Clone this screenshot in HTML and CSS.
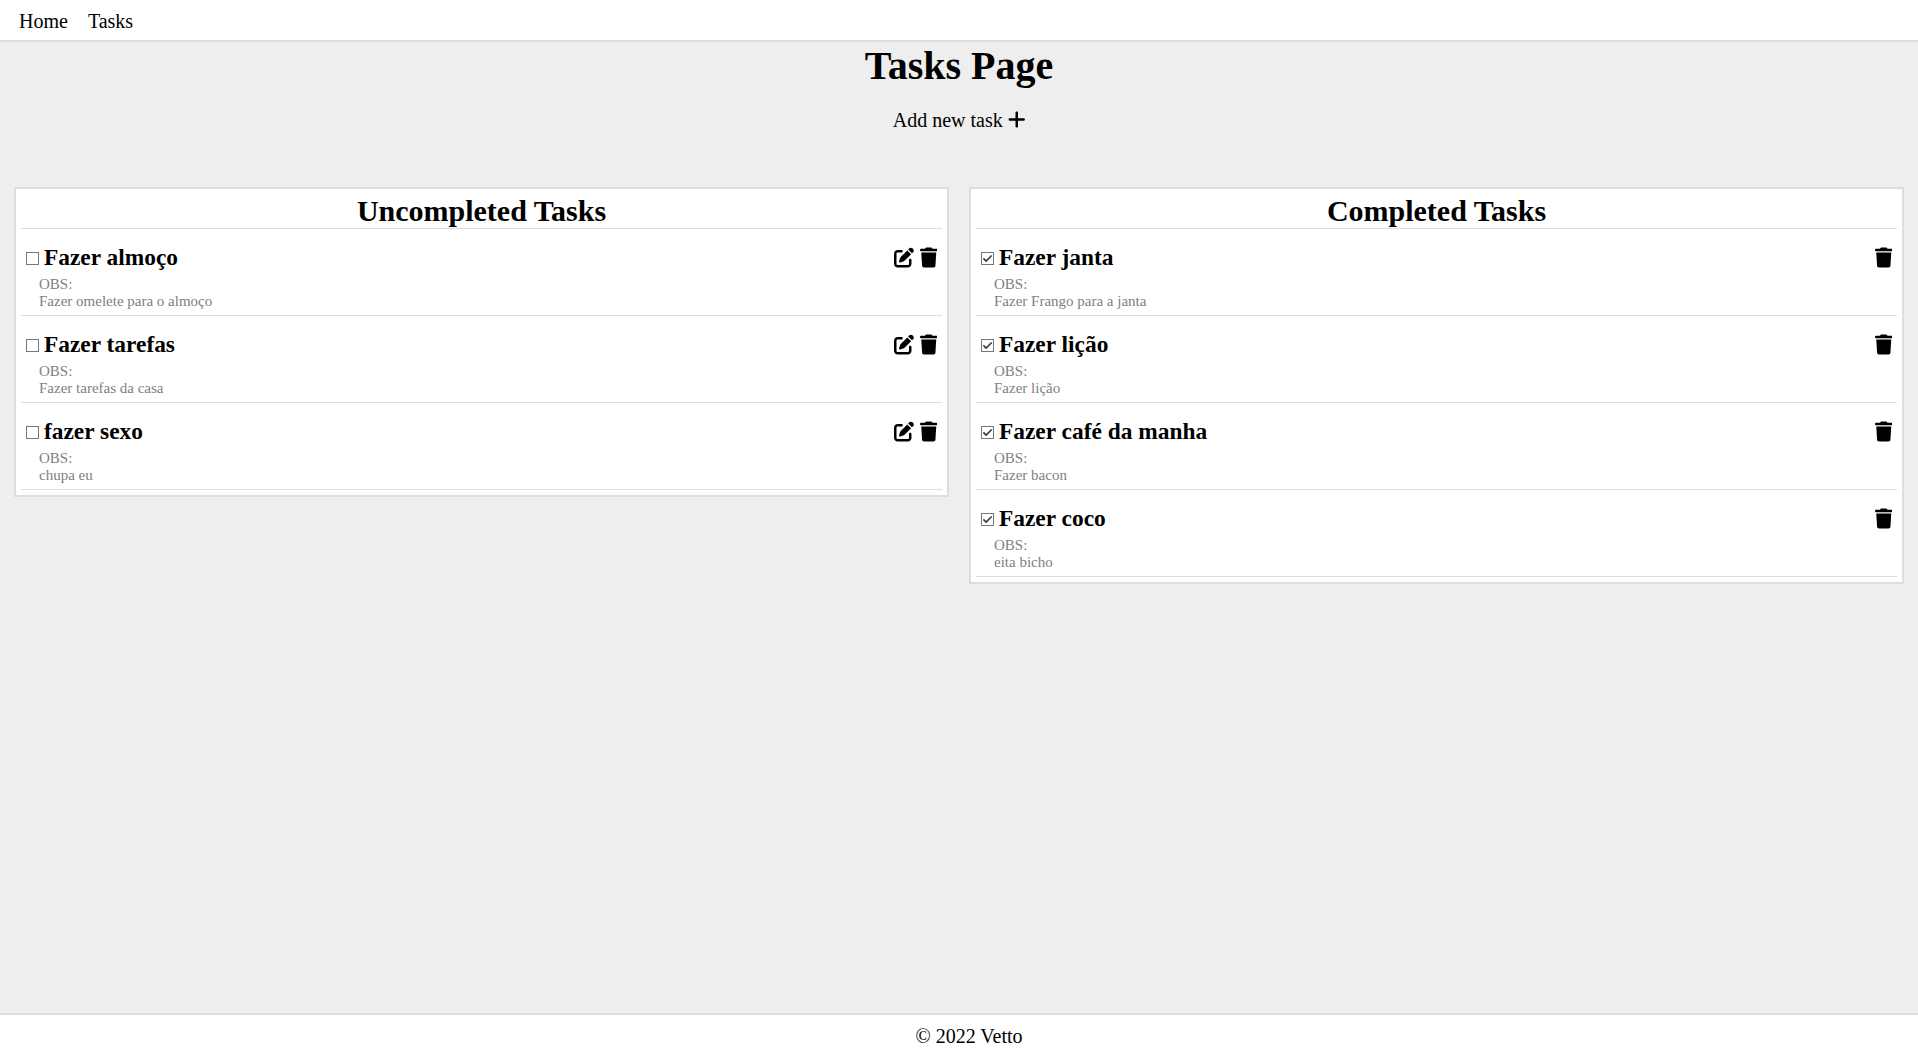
FILE: index.html
```html
<!DOCTYPE html>
<html lang="pt-BR">
<head>
<meta charset="utf-8">
<title>Tasks Page</title>
<link rel="stylesheet" href="styles.css">
</head>
<body>
<svg class="sprite" width="0" height="0" aria-hidden="true">
  <symbol id="plus" viewBox="0 -13 448 538"><path d="M256 80c0-17.7-14.3-32-32-32s-32 14.3-32 32V224H48c-17.7 0-32 14.3-32 32s14.3 32 32 32H192V432c0 17.7 14.3 32 32 32s32-14.3 32-32V288H400c17.7 0 32-14.3 32-32s-14.3-32-32-32H256V80z"/></symbol>
  <symbol id="trash" viewBox="0 -13 448 538"><path d="M135.2 17.7L128 32H32C14.3 32 0 46.3 0 64S14.3 96 32 96H416c17.7 0 32-14.3 32-32s-14.3-32-32-32H320l-7.2-14.3C307.4 6.8 296.3 0 284.2 0H163.8c-12.1 0-23.2 6.8-28.6 17.7zM416 128H32L53.2 467c1.6 25.3 22.6 45 47.9 45H346.9c25.3 0 46.3-19.7 47.9-45L416 128z"/></symbol>
  <symbol id="edit" viewBox="0 -13 512 538"><path d="M471.6 21.7c-21.9-21.9-57.3-21.9-79.2 0L362.3 51.7l97.9 97.9 30.1-30.1c21.9-21.9 21.9-57.3 0-79.2L471.6 21.7zM172.4 241.7c-6.1 6.1-10.8 13.6-13.5 21.9l-29.6 88.8c-2.9 8.6-.6 18.1 5.8 24.6s15.9 8.7 24.6 5.8l88.8-29.6c8.2-2.7 15.7-7.4 21.9-13.5L437.7 172.3 339.7 74.3 172.4 241.7zM96 64C43 64 0 107 0 160V416c0 53 43 96 96 96H352c53 0 96-43 96-96V320c0-17.7-14.3-32-32-32s-32 14.3-32 32v96c0 17.7-14.3 32-32 32H96c-17.7 0-32-14.3-32-32V160c0-17.7 14.3-32 32-32h96c17.7 0 32-14.3 32-32s-14.3-32-32-32H96z"/></symbol>
  <symbol id="box" viewBox="0 0 13 13"><path class="box-frame" d="M.5.5h12v12H.5z"/></symbol>
  <symbol id="box-checked" viewBox="0 0 13 13"><path class="box-frame" d="M.5.5h12v12H.5z"/><path class="box-tick" d="M2.4 6.4l2.7 2.7 5.6-5.6"/></symbol>
</svg>

<nav class="navbar"><a>Home</a><a>Tasks</a></nav>

<main class="content">
  <h1 class="page-title">Tasks Page</h1>
  <a class="add-task">Add new task <svg class="icon icon-narrow"><use href="#plus"/></svg></a>

  <div class="columns">
    <section class="card">
      <h2 class="card-title">Uncompleted Tasks</h2>
      <article class="task">
        <div class="task-head"><svg class="checkbox"><use href="#box"/></svg><h3>Fazer almoço</h3><div class="actions"><svg class="icon"><use href="#edit"/></svg><svg class="icon icon-narrow"><use href="#trash"/></svg></div></div>
        <p class="obs">OBS:<br>Fazer omelete para o almoço</p>
      </article>
      <article class="task">
        <div class="task-head"><svg class="checkbox"><use href="#box"/></svg><h3>Fazer tarefas</h3><div class="actions"><svg class="icon"><use href="#edit"/></svg><svg class="icon icon-narrow"><use href="#trash"/></svg></div></div>
        <p class="obs">OBS:<br>Fazer tarefas da casa</p>
      </article>
      <article class="task">
        <div class="task-head"><svg class="checkbox"><use href="#box"/></svg><h3>fazer sexo</h3><div class="actions"><svg class="icon"><use href="#edit"/></svg><svg class="icon icon-narrow"><use href="#trash"/></svg></div></div>
        <p class="obs">OBS:<br>chupa eu</p>
      </article>
    </section>

    <section class="card">
      <h2 class="card-title">Completed Tasks</h2>
      <article class="task">
        <div class="task-head"><svg class="checkbox"><use href="#box-checked"/></svg><h3>Fazer janta</h3><div class="actions"><svg class="icon icon-narrow"><use href="#trash"/></svg></div></div>
        <p class="obs">OBS:<br>Fazer Frango para a janta</p>
      </article>
      <article class="task">
        <div class="task-head"><svg class="checkbox"><use href="#box-checked"/></svg><h3>Fazer lição</h3><div class="actions"><svg class="icon icon-narrow"><use href="#trash"/></svg></div></div>
        <p class="obs">OBS:<br>Fazer lição</p>
      </article>
      <article class="task">
        <div class="task-head"><svg class="checkbox"><use href="#box-checked"/></svg><h3>Fazer café da manha</h3><div class="actions"><svg class="icon icon-narrow"><use href="#trash"/></svg></div></div>
        <p class="obs">OBS:<br>Fazer bacon</p>
      </article>
      <article class="task">
        <div class="task-head"><svg class="checkbox"><use href="#box-checked"/></svg><h3>Fazer coco</h3><div class="actions"><svg class="icon icon-narrow"><use href="#trash"/></svg></div></div>
        <p class="obs">OBS:<br>eita bicho</p>
      </article>
    </section>
  </div>
</main>

<footer class="footer">© 2022 Vetto</footer>
</body>
</html>
```
FILE: styles.css
```css
* {
  box-sizing: border-box;
  margin: 0;
  padding: 0;
}

body {
  display: flex;
  flex-direction: column;
  height: 100vh;
  overflow: hidden;
  background: #eee;
  color: #000;
  font: 20px/23px "Liberation Serif", "Times New Roman", serif;
}

.sprite {
  position: absolute;
}

.navbar {
  display: flex;
  gap: 20px;
  height: 42px;
  padding: 10px 19px 0;
  background: #fff;
  border-bottom: 2px solid #ddd;
}

.content {
  display: flex;
  flex: 1;
  flex-direction: column;
  align-items: center;
  padding: 0 14px;
}

.page-title {
  margin-top: 1px;
  font-size: 40px;
  line-height: 46px;
}

.add-task {
  display: flex;
  align-items: center;
  gap: 5px;
  margin-top: 20px;
}

.add-task .icon {
  margin-top: -2px;
}

.columns {
  display: grid;
  grid-template-columns: 1fr 1fr;
  gap: 20px;
  align-items: start;
  width: 100%;
  margin-top: 55px;
}

.card {
  padding: 5px;
  background: #fff;
  border: 2px solid #ddd;
}

.card-title {
  height: 35px;
  border-bottom: 1px solid #ddd;
  font-size: 30px;
  line-height: 34px;
  text-align: center;
}

.task {
  height: 87px;
  padding: 15px 5px 0;
  border-bottom: 1px solid #ddd;
}

.task-head {
  display: flex;
  align-items: center;
  height: 27px;
}

.task-head h3 {
  margin-left: 5px;
  font-size: 23.4px;
  line-height: 27px;
}

.checkbox {
  width: 13px;
  height: 13px;
  margin-top: 2px;
}

.box-frame {
  fill: #fff;
  stroke: #767676;
  shape-rendering: crispEdges;
}

.box-tick {
  fill: none;
  stroke: #333;
  stroke-width: 1.5;
}

.actions {
  display: flex;
  gap: 5.5px;
  margin-left: auto;
}

.icon {
  width: 20px;
  height: 21px;
}

.icon-narrow {
  width: 17.5px;
}

.obs {
  margin: 5px 0 0 13px;
  color: gray;
  font-size: 15px;
  line-height: 17px;
}

.footer {
  height: 49px;
  padding: 10px 0 0 20px;
  background: #fff;
  border-top: 2px solid #ddd;
  text-align: center;
}
```
